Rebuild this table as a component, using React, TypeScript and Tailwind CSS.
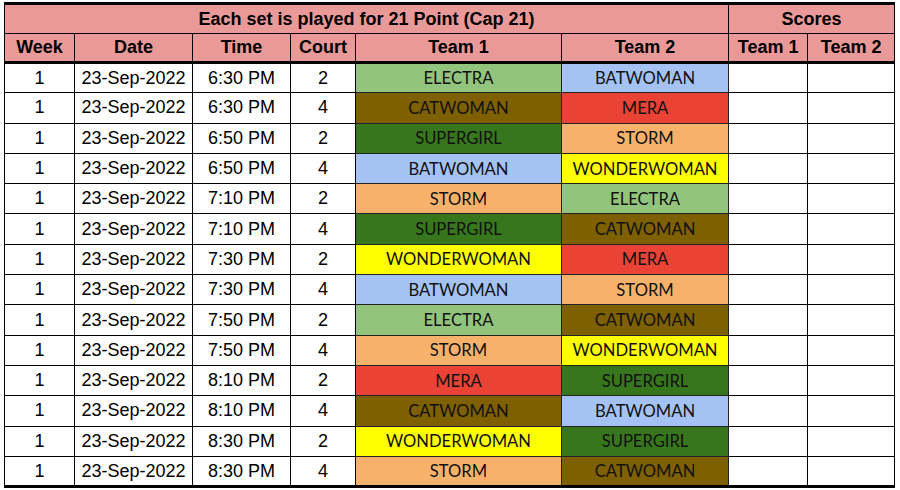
const teamColors: Record<string, string> = {
  ELECTRA: 'bg-[#93c47d]',
  BATWOMAN: 'bg-[#a4c2f4]',
  CATWOMAN: 'bg-[#7f6000]',
  MERA: 'bg-[#ea4335]',
  SUPERGIRL: 'bg-[#38761d]',
  STORM: 'bg-[#f6b26b]',
  WONDERWOMAN: 'bg-[#ffff00]',
}

const games: [string, string, string, string][] = [
  ['6:30 PM', '2', 'ELECTRA', 'BATWOMAN'],
  ['6:30 PM', '4', 'CATWOMAN', 'MERA'],
  ['6:50 PM', '2', 'SUPERGIRL', 'STORM'],
  ['6:50 PM', '4', 'BATWOMAN', 'WONDERWOMAN'],
  ['7:10 PM', '2', 'STORM', 'ELECTRA'],
  ['7:10 PM', '4', 'SUPERGIRL', 'CATWOMAN'],
  ['7:30 PM', '2', 'WONDERWOMAN', 'MERA'],
  ['7:30 PM', '4', 'BATWOMAN', 'STORM'],
  ['7:50 PM', '2', 'ELECTRA', 'CATWOMAN'],
  ['7:50 PM', '4', 'STORM', 'WONDERWOMAN'],
  ['8:10 PM', '2', 'MERA', 'SUPERGIRL'],
  ['8:10 PM', '4', 'CATWOMAN', 'BATWOMAN'],
  ['8:30 PM', '2', 'WONDERWOMAN', 'SUPERGIRL'],
  ['8:30 PM', '4', 'STORM', 'CATWOMAN'],
]

const th = 'border border-black bg-[#ea9999] font-bold text-[18px] text-center p-0'
const td = 'border border-black text-center p-0 text-[18px]'
const team = "border border-[#222] text-center p-0 pt-[1px] text-[16.6px] text-[#111] font-['Lato',sans-serif]"

export default function App() {
  return (
    <div className="bg-white w-[900px] h-[490px] pt-[2px] pl-[4px] font-['Liberation_Sans',Arial,sans-serif] text-black">
      <table className="table-fixed border-collapse w-[890px] border-t-[3px] border-b-[3px] border-black">
        <colgroup>
          <col className="w-[70px]" />
          <col className="w-[118px]" />
          <col className="w-[98px]" />
          <col className="w-[65px]" />
          <col className="w-[206px]" />
          <col className="w-[167px]" />
          <col className="w-[79px]" />
          <col className="w-[87px]" />
        </colgroup>
        <thead>
          <tr className="h-[30px]">
            <th colSpan={6} className={th}>
              Each set is played for 21 Point (Cap 21)
            </th>
            <th colSpan={2} className={th}>
              Scores
            </th>
          </tr>
          <tr className="h-[29px] border-b-[3px] border-black">
            <th className={th}>Week</th>
            <th className={th}>Date</th>
            <th className={th}>Time</th>
            <th className={th}>Court</th>
            <th className={th}>Team 1</th>
            <th className={th}>Team 2</th>
            <th className={th}>Team 1</th>
            <th className={th}>Team 2</th>
          </tr>
        </thead>
        <tbody>
          {games.map(([time, court, t1, t2], i) => (
            <tr key={i} className="h-[30.3px]">
              <td className={td}>1</td>
              <td className={td}>23-Sep-2022</td>
              <td className={td}>{time}</td>
              <td className={td}>{court}</td>
              <td className={`${team} ${teamColors[t1]}`}>{t1}</td>
              <td className={`${team} ${teamColors[t2]}`}>{t2}</td>
              <td className={td}></td>
              <td className={td}></td>
            </tr>
          ))}
        </tbody>
      </table>
    </div>
  )
}
